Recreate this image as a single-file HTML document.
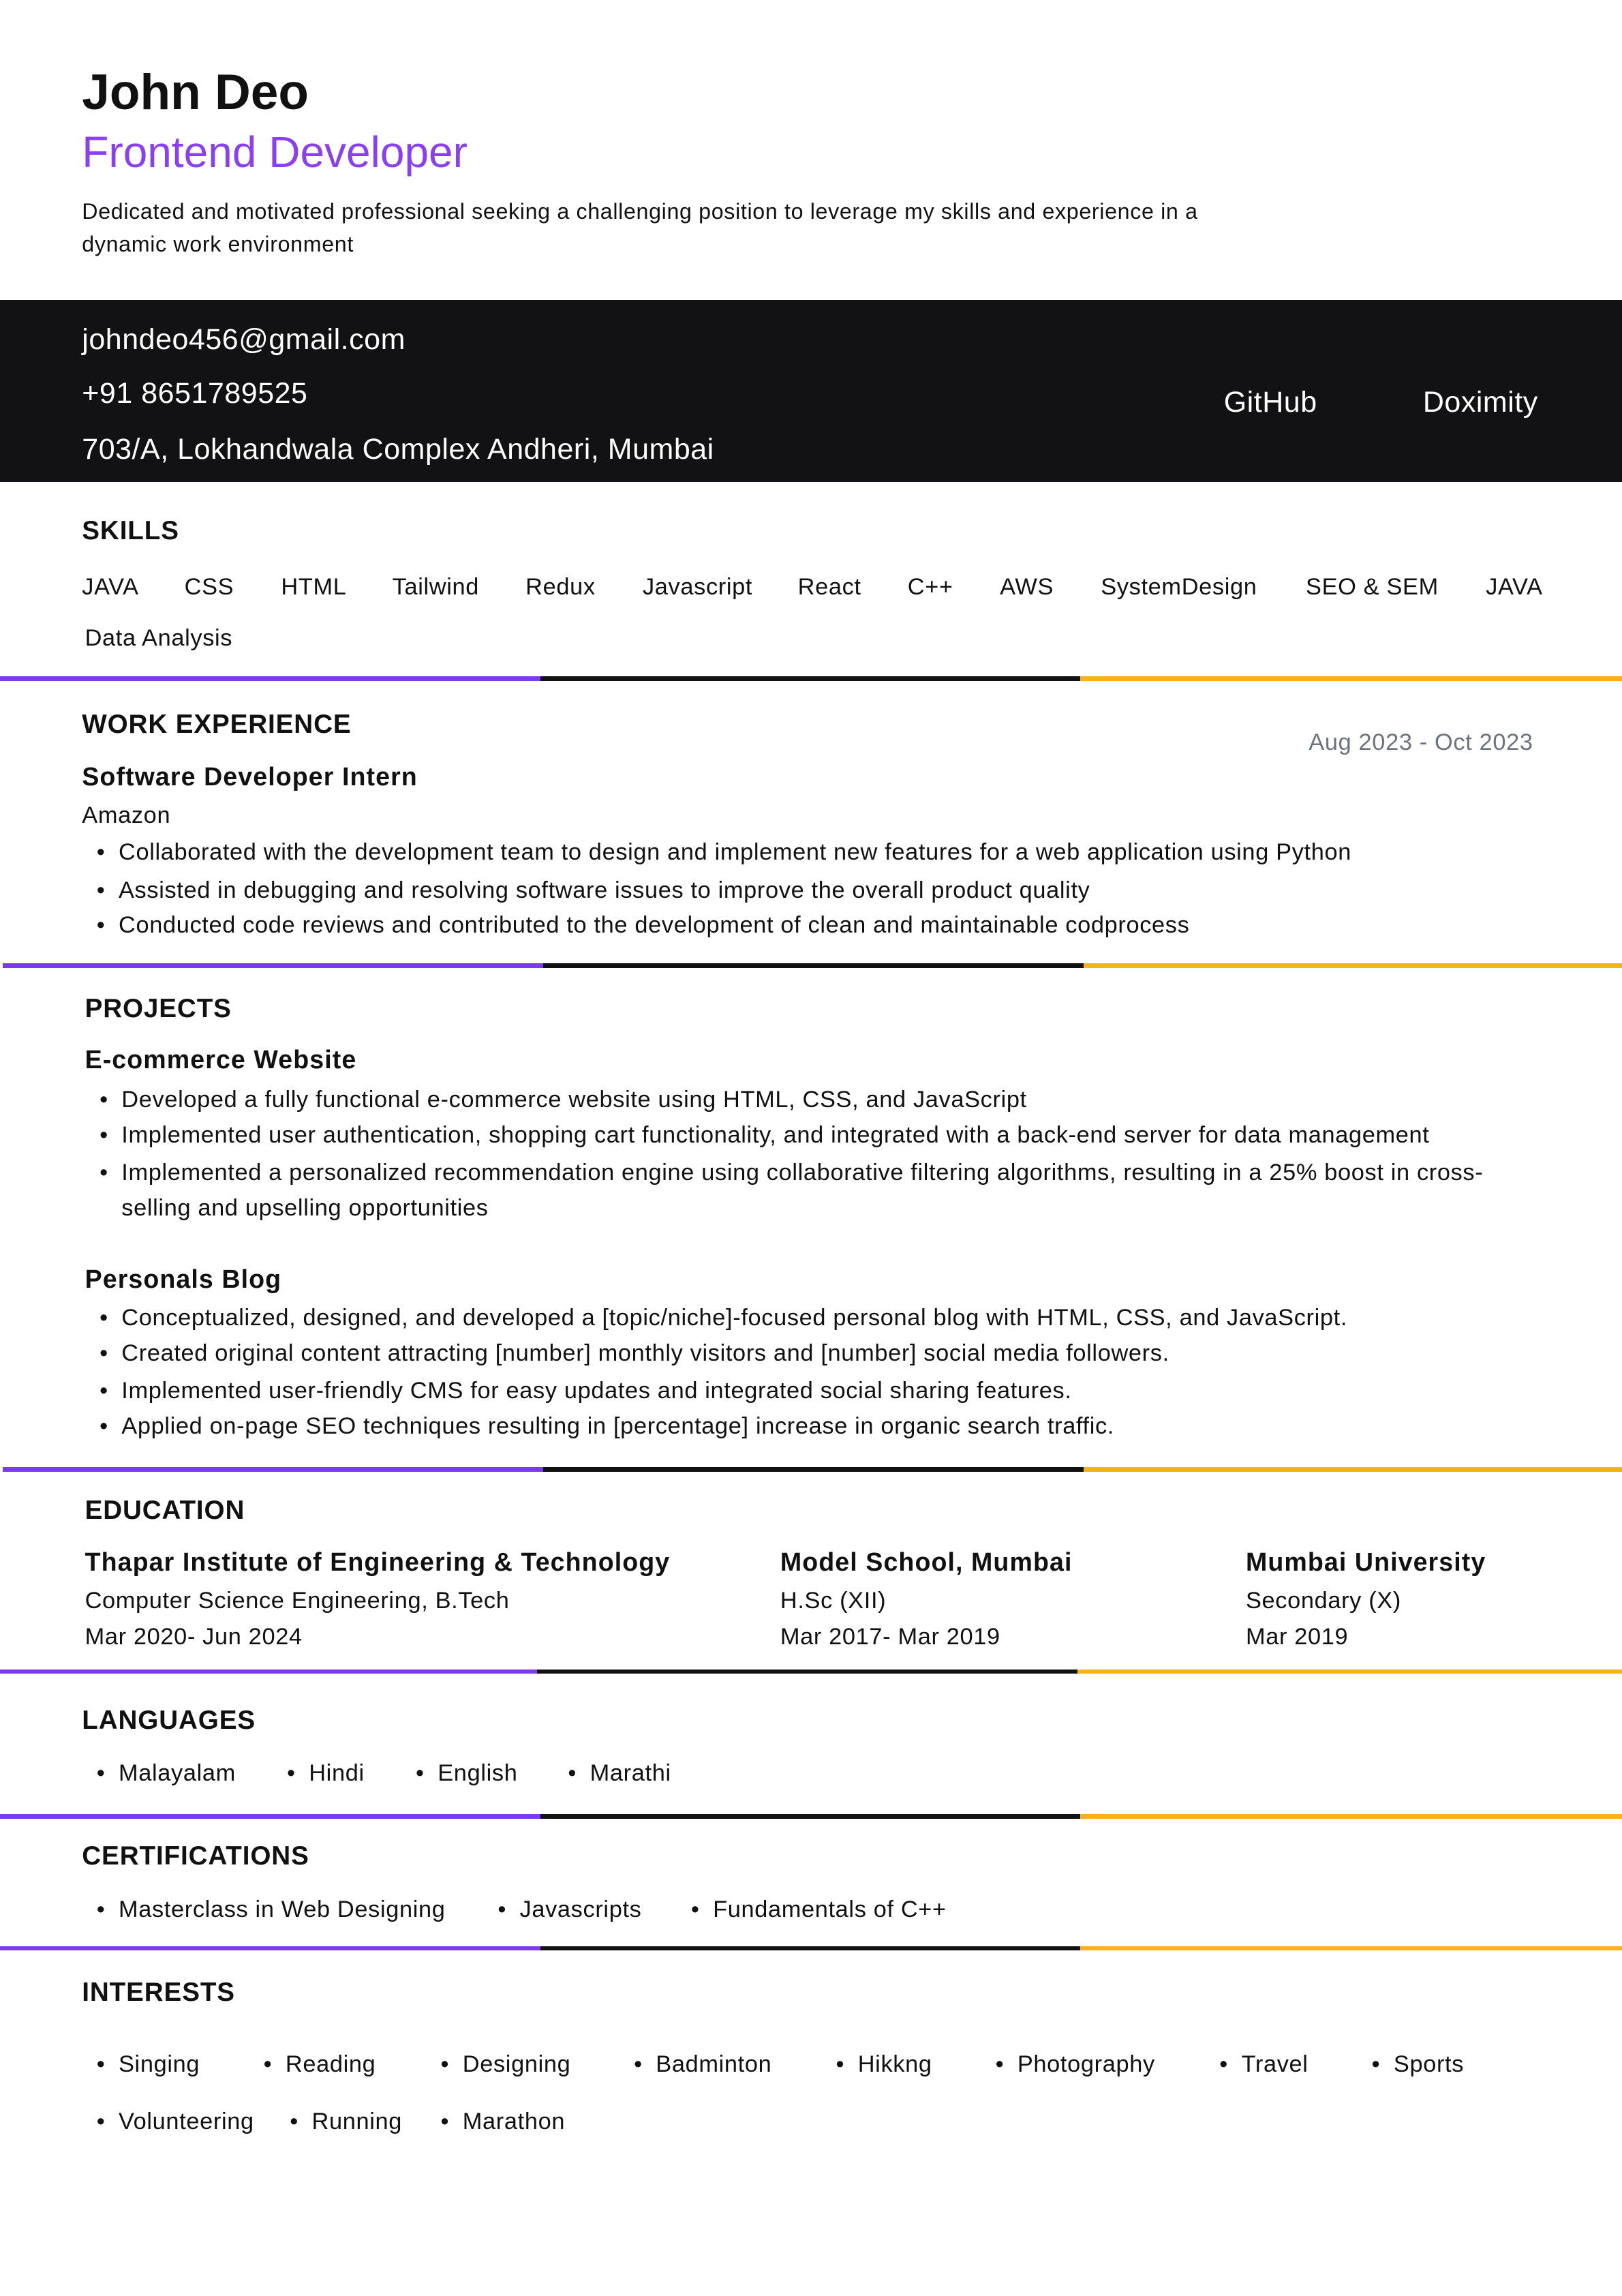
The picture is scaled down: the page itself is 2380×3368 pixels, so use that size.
<!DOCTYPE html>
<html><head><meta charset="utf-8">
<style>
html,body{margin:0;padding:0;background:#fff;}
body{width:2380px;height:3368px;overflow:hidden;}
#w{zoom:2.148;width:1108px;height:1568px;position:relative;font-family:"Liberation Sans",sans-serif;color:#111;}
#w div{position:absolute;white-space:nowrap;line-height:1;}
#w div.tx{margin-top:1px;}
.h{font-size:18px;font-weight:bold;letter-spacing:0.4px;}
.b{font-size:16px;letter-spacing:0.3px;}
.t{font-size:17.5px;font-weight:bold;letter-spacing:0.5px;}
.c{font-size:20px;color:#fff;letter-spacing:0.25px;}
.bar{height:3px;}
.p{background:#7c3aed;}.k{background:#111;}.y{background:#fbb117;}
</style></head><body><div id="w">
<div style="left:56px;top:46px;font-size:34px;font-weight:bold;">John Deo</div>
<div style="left:56px;top:89px;font-size:29.8px;color:#8a3ff0;">Frontend Developer</div>
<div style="left:56px;top:137px;font-size:15px;letter-spacing:0.3px;">Dedicated and motivated professional seeking a challenging position to leverage my skills and experience in a</div>
<div style="left:56px;top:159px;font-size:15px;letter-spacing:0.3px;">dynamic work environment</div>
<div style="left:0;top:205px;width:1108px;height:124px;background:#121214;"></div>
<div class="c" style="left:56px;top:222px;">johndeo456@gmail.com</div>
<div class="c" style="left:56px;top:259px;">+91 8651789525</div>
<div class="c" style="left:56px;top:297px;">703/A, Lokhandwala Complex Andheri, Mumbai</div>
<div class="c" style="left:836px;top:265px;">GitHub</div>
<div class="c" style="left:972px;top:265px;">Doximity</div>

<div class="h" style="left:56px;top:354px;">SKILLS</div>
<div class="b" style="left:56px;top:393px;">JAVA</div>
<div class="b" style="left:126px;top:393px;">CSS</div>
<div class="b" style="left:192px;top:393px;">HTML</div>
<div class="b" style="left:268px;top:393px;">Tailwind</div>
<div class="b" style="left:359px;top:393px;">Redux</div>
<div class="b" style="left:439px;top:393px;">Javascript</div>
<div class="b" style="left:545px;top:393px;">React</div>
<div class="b" style="left:620px;top:393px;">C++</div>
<div class="b" style="left:683px;top:393px;">AWS</div>
<div class="b" style="left:752px;top:393px;">SystemDesign</div>
<div class="b" style="left:892px;top:393px;">SEO &amp; SEM</div>
<div class="b" style="left:1015px;top:393px;">JAVA</div>
<div class="b" style="left:58px;top:428px;">Data Analysis</div>

<div class="bar p" style="left:0;top:462px;width:369px;"></div><div class="bar k" style="left:369px;top:462px;width:369px;"></div><div class="bar y" style="left:738px;top:462px;width:370px;"></div>

<div class="h" style="left:56px;top:486px;">WORK EXPERIENCE</div>
<div class="b" style="left:894px;top:499px;color:#6b7280;">Aug 2023 - Oct 2023</div>
<div class="t" style="left:56px;top:522px;">Software Developer Intern</div>
<div class="b" style="left:56px;top:549px;">Amazon</div>
<div class="b" style="left:66px;top:574px;">•</div><div class="b" style="left:81px;top:574px;">Collaborated with the development team to design and implement new features for a web application using Python</div>
<div class="b" style="left:66px;top:600px;">•</div><div class="b" style="left:81px;top:600px;">Assisted in debugging and resolving software issues to improve the overall product quality</div>
<div class="b" style="left:66px;top:624px;">•</div><div class="b" style="left:81px;top:624px;">Conducted code reviews and contributed to the development of clean and maintainable codprocess</div>

<div class="bar p" style="left:2px;top:658px;width:369px;"></div><div class="bar k" style="left:371px;top:658px;width:369px;"></div><div class="bar y" style="left:740px;top:658px;width:368px;"></div>

<div class="h" style="left:58px;top:680px;">PROJECTS</div>
<div class="t" style="left:58px;top:715px;">E-commerce Website</div>
<div class="b" style="left:68px;top:743px;">•</div><div class="b" style="left:83px;top:743px;">Developed a fully functional e-commerce website using HTML, CSS, and JavaScript</div>
<div class="b" style="left:68px;top:767px;">•</div><div class="b" style="left:83px;top:767px;">Implemented user authentication, shopping cart functionality, and integrated with a back-end server for data management</div>
<div class="b" style="left:68px;top:793px;">•</div><div class="b" style="left:83px;top:793px;">Implemented a personalized recommendation engine using collaborative filtering algorithms, resulting in a 25% boost in cross-</div>
<div class="b" style="left:83px;top:817px;">selling and upselling opportunities</div>
<div class="t" style="left:58px;top:865px;">Personals Blog</div>
<div class="b" style="left:68px;top:892px;">•</div><div class="b" style="left:83px;top:892px;">Conceptualized, designed, and developed a [topic/niche]-focused personal blog with HTML, CSS, and JavaScript.</div>
<div class="b" style="left:68px;top:916px;">•</div><div class="b" style="left:83px;top:916px;">Created original content attracting [number] monthly visitors and [number] social media followers.</div>
<div class="b" style="left:68px;top:942px;">•</div><div class="b" style="left:83px;top:942px;">Implemented user-friendly CMS for easy updates and integrated social sharing features.</div>
<div class="b" style="left:68px;top:966px;">•</div><div class="b" style="left:83px;top:966px;">Applied on-page SEO techniques resulting in [percentage] increase in organic search traffic.</div>

<div class="bar p" style="left:2px;top:1002px;width:369px;"></div><div class="bar k" style="left:371px;top:1002px;width:369px;"></div><div class="bar y" style="left:740px;top:1002px;width:368px;"></div>

<div class="h" style="left:58px;top:1023px;">EDUCATION</div>
<div class="t" style="left:58px;top:1058px;">Thapar Institute of Engineering &amp; Technology</div>
<div class="b" style="left:58px;top:1085px;">Computer Science Engineering, B.Tech</div>
<div class="b" style="left:58px;top:1110px;">Mar 2020- Jun 2024</div>
<div class="t" style="left:533px;top:1058px;">Model School, Mumbai</div>
<div class="b" style="left:533px;top:1085px;">H.Sc (XII)</div>
<div class="b" style="left:533px;top:1110px;">Mar 2017- Mar 2019</div>
<div class="t" style="left:851px;top:1058px;">Mumbai University</div>
<div class="b" style="left:851px;top:1085px;">Secondary (X)</div>
<div class="b" style="left:851px;top:1110px;">Mar 2019</div>

<div class="bar p" style="left:0;top:1140px;width:367px;"></div><div class="bar k" style="left:367px;top:1140px;width:369px;"></div><div class="bar y" style="left:736px;top:1140px;width:372px;"></div>

<div class="h" style="left:56px;top:1166px;">LANGUAGES</div>
<div class="b" style="left:66px;top:1203px;">•</div><div class="b" style="left:81px;top:1203px;">Malayalam</div>
<div class="b" style="left:196px;top:1203px;">•</div><div class="b" style="left:211px;top:1203px;">Hindi</div>
<div class="b" style="left:284px;top:1203px;">•</div><div class="b" style="left:299px;top:1203px;">English</div>
<div class="b" style="left:388px;top:1203px;">•</div><div class="b" style="left:403px;top:1203px;">Marathi</div>

<div class="bar p" style="left:0;top:1239px;width:369px;"></div><div class="bar k" style="left:369px;top:1239px;width:369px;"></div><div class="bar y" style="left:738px;top:1239px;width:370px;"></div>

<div class="h" style="left:56px;top:1259px;">CERTIFICATIONS</div>
<div class="b" style="left:66px;top:1296px;">•</div><div class="b" style="left:81px;top:1296px;">Masterclass in Web Designing</div>
<div class="b" style="left:340px;top:1296px;">•</div><div class="b" style="left:355px;top:1296px;">Javascripts</div>
<div class="b" style="left:472px;top:1296px;">•</div><div class="b" style="left:487px;top:1296px;">Fundamentals of C++</div>

<div class="bar p" style="left:0;top:1329px;width:369px;"></div><div class="bar k" style="left:369px;top:1329px;width:369px;"></div><div class="bar y" style="left:738px;top:1329px;width:370px;"></div>

<div class="h" style="left:56px;top:1352px;">INTERESTS</div>
<div class="b" style="left:66px;top:1402px;">•</div><div class="b" style="left:81px;top:1402px;">Singing</div>
<div class="b" style="left:180px;top:1402px;">•</div><div class="b" style="left:195px;top:1402px;">Reading</div>
<div class="b" style="left:301px;top:1402px;">•</div><div class="b" style="left:316px;top:1402px;">Designing</div>
<div class="b" style="left:433px;top:1402px;">•</div><div class="b" style="left:448px;top:1402px;">Badminton</div>
<div class="b" style="left:571px;top:1402px;">•</div><div class="b" style="left:586px;top:1402px;">Hikkng</div>
<div class="b" style="left:680px;top:1402px;">•</div><div class="b" style="left:695px;top:1402px;">Photography</div>
<div class="b" style="left:833px;top:1402px;">•</div><div class="b" style="left:848px;top:1402px;">Travel</div>
<div class="b" style="left:937px;top:1402px;">•</div><div class="b" style="left:952px;top:1402px;">Sports</div>
<div class="b" style="left:66px;top:1441px;">•</div><div class="b" style="left:81px;top:1441px;">Volunteering</div>
<div class="b" style="left:198px;top:1441px;">•</div><div class="b" style="left:213px;top:1441px;">Running</div>
<div class="b" style="left:301px;top:1441px;">•</div><div class="b" style="left:316px;top:1441px;">Marathon</div>
</div></body></html>
